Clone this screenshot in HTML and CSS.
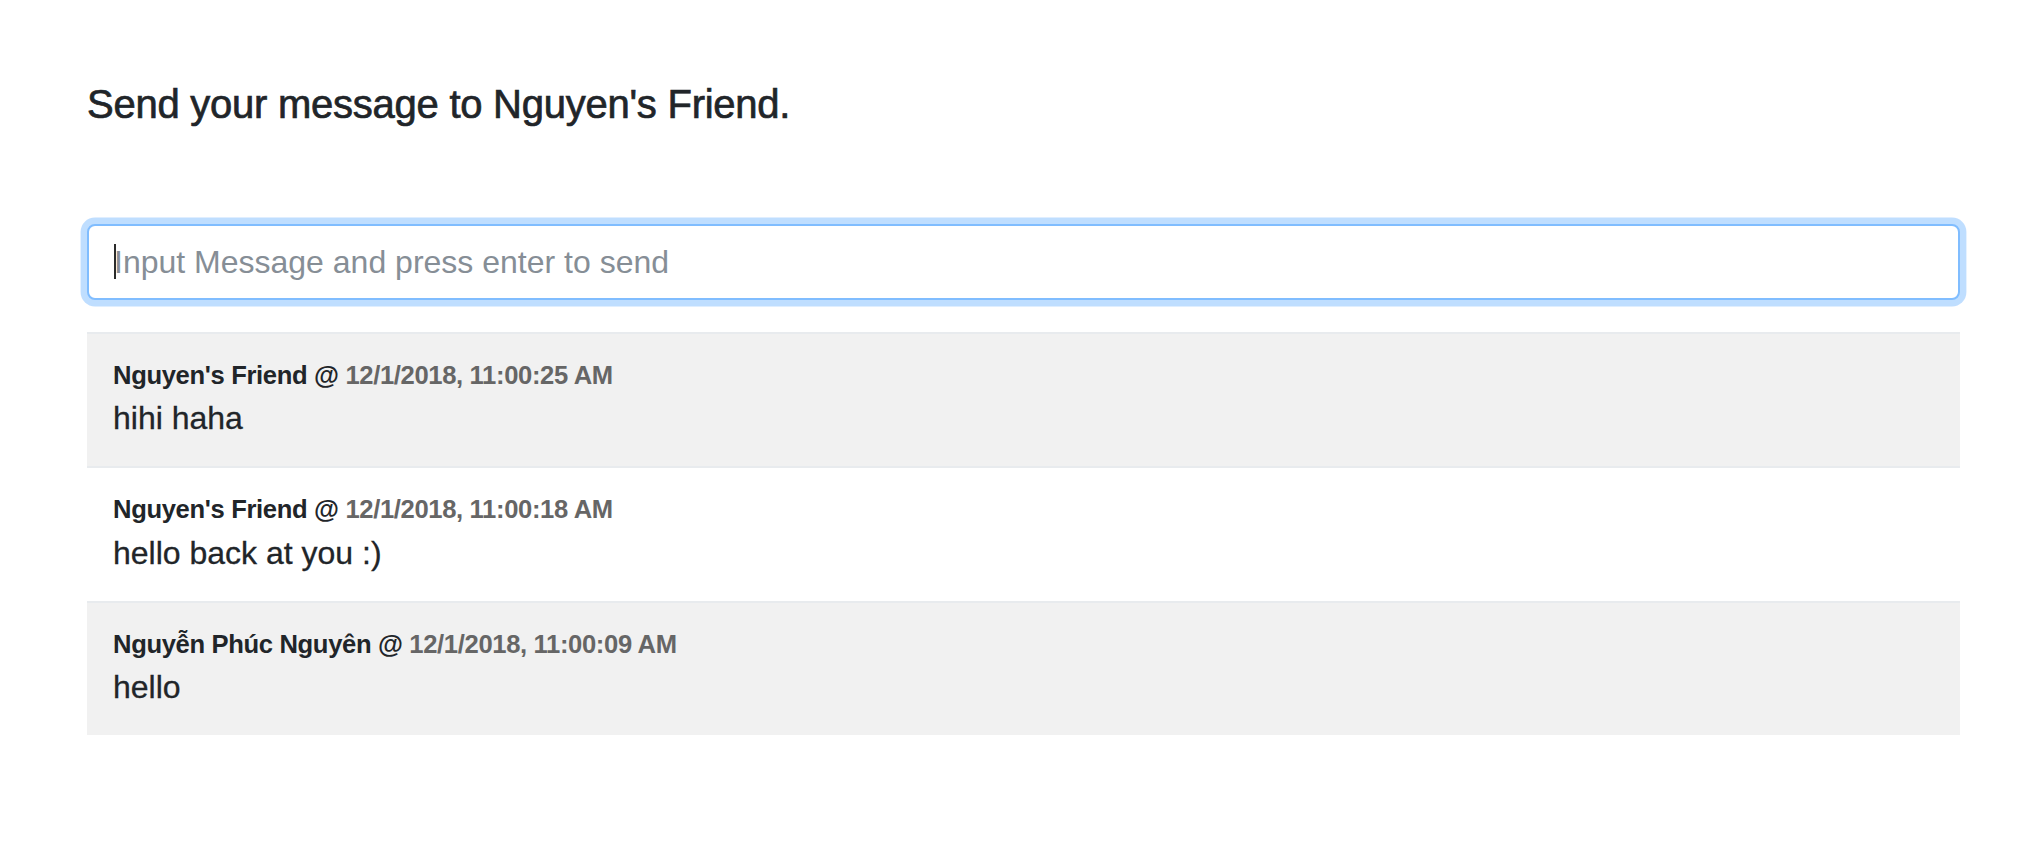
FILE: index.html
```html
<!DOCTYPE html>
<html lang="en">
<head>
<meta charset="utf-8">
<title>Chat</title>
<link rel="stylesheet" href="styles.css">
</head>
<body>
<div class="page">
  <h5 class="title">Send your message to Nguyen's Friend.</h5>
  <div class="composer">
    <input class="msg-input" type="text" placeholder="Input Message and press enter to send">
    <span class="caret"></span>
  </div>
  <ul class="messages">
    <li class="msg shaded">
      <div class="meta"><span class="author">Nguyen's Friend @</span> <span class="time">12/1/2018, 11:00:25 AM</span></div>
      <div class="body">hihi haha</div>
    </li>
    <li class="msg">
      <div class="meta"><span class="author">Nguyen's Friend @</span> <span class="time">12/1/2018, 11:00:18 AM</span></div>
      <div class="body">hello back at you :)</div>
    </li>
    <li class="msg shaded">
      <div class="meta"><span class="author">Nguyễn Phúc Nguyên @</span> <span class="time">12/1/2018, 11:00:09 AM</span></div>
      <div class="body">hello</div>
    </li>
  </ul>
</div>
</body>
</html>
```
FILE: styles.css
```css
html, body {
  margin: 0;
  padding: 0;
  background: #ffffff;
}

body {
  font-family: "Liberation Sans", Arial, sans-serif;
  color: #212529;
}

.page {
  padding: 80px 82px 0 87px;
}

.title {
  margin: 0;
  font-size: 40px;
  font-weight: 400;
  line-height: 48px;
  color: #212529;
  letter-spacing: -0.25px;
  -webkit-text-stroke: 0.7px #212529;
}

.composer {
  position: relative;
  margin-top: 96px;
}

.msg-input {
  display: block;
  box-sizing: border-box;
  width: 100%;
  height: 76px;
  margin: 0;
  padding: 12px 24px 12px 25px;
  font-family: "Liberation Sans", Arial, sans-serif;
  font-size: 32px;
  line-height: 48px;
  color: #495057;
  background: #ffffff;
  border: 2px solid #80bdff;
  border-radius: 8px;
  box-shadow: 0 0 0 6.4px rgba(0, 123, 255, 0.25);
  outline: none;
}

.msg-input::placeholder {
  color: #868e96;
  opacity: 1;
}

.caret {
  position: absolute;
  left: 27px;
  top: 20px;
  width: 2px;
  height: 35px;
  background: #2b2b2b;
}

.messages {
  list-style: none;
  margin: 32px 0 0 0;
  padding: 0;
}

.msg {
  border-top: 2px solid #e8ebee;
  padding: 22px 26px 24px 26px;
  background: #ffffff;
}

.msg.shaded {
  background: #f1f1f1;
}

.meta {
  font-size: 25.6px;
  line-height: 38.4px;
  font-weight: 700;
  letter-spacing: -0.35px;
}

.author {
  color: #212529;
}

.time {
  color: #666666;
}

.body {
  font-size: 32px;
  line-height: 48px;
  color: #212529;
  -webkit-text-stroke: 0.3px #212529;
}
```
